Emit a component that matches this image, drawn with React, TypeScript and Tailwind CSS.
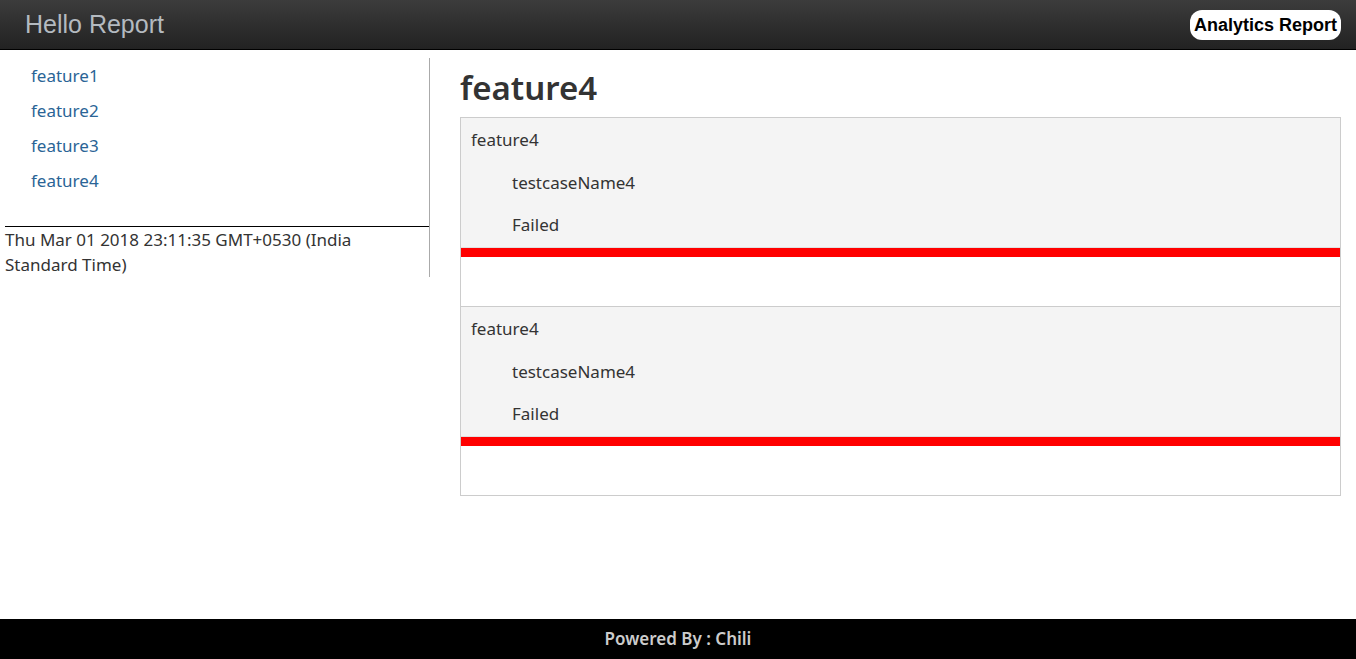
const features = ["feature1", "feature2", "feature3", "feature4"];

const results = [
  { feature: "feature4", testcase: "testcaseName4", status: "Failed" },
  { feature: "feature4", testcase: "testcaseName4", status: "Failed" },
];

function ResultCard({ feature, testcase, status }: { feature: string; testcase: string; status: string }) {
  return (
    <div className="flex flex-col">
      <div className="bg-[#f4f4f4] pt-[10px] pb-[10px]">
        <p className="h-[24px] pl-[10px] leading-[24px]">{feature}</p>
        <p className="mt-[19px] h-[24px] pl-[51px] leading-[24px]">{testcase}</p>
        <p className="mt-[18px] h-[24px] pl-[51px] leading-[24px]">{status}</p>
      </div>
      <div className="h-[10px] border-t border-[#e0e0e0] bg-[#ff0000]" />
      <div className="h-[49px] bg-white" />
    </div>
  );
}

export default function App() {
  return (
    <div className="flex h-[659px] flex-col bg-white font-['Noto_Sans',sans-serif] text-[17px] text-[#333]">
      <header className="flex h-[50px] shrink-0 items-center justify-between border-b border-black bg-gradient-to-b from-[#3c3c3c] to-[#222222] pl-[25px] pr-[15px]">
        <span className="font-['Liberation_Sans',sans-serif] text-[25px] text-[#b4bac0]">Hello Report</span>
        <span className="rounded-[12px] bg-white px-[4px] py-[3px] font-['Liberation_Sans',sans-serif] text-[18px] font-bold leading-[24px] text-black">
          Analytics Report
        </span>
      </header>

      <div className="flex flex-1 items-start">
        <aside className="mt-[8px] w-[430px] shrink-0 border-r border-[#aaa]">
          <ul className="pt-[5px] pb-[23px]">
            {features.map((f) => (
              <li key={f} className="h-[35px] pl-[31px] leading-[26px] text-[#2a6496]">
                {f}
              </li>
            ))}
          </ul>
          <div className="ml-[5px] border-t border-black pr-[40px] leading-[25px]">
            Thu Mar 01 2018 23:11:35 GMT+0530 (India Standard Time)
          </div>
        </aside>

        <main className="mr-[15px] ml-[30px] flex-1">
          <h1 className="mt-[14px] mb-[5px] text-[33px] leading-[48px] font-semibold">feature4</h1>
          <div className="border border-[#ccc] [&>*+*]:border-t [&>*+*]:border-[#ccc]">
            {results.map((r, i) => (
              <ResultCard key={i} {...r} />
            ))}
          </div>
        </main>
      </div>

      <footer className="flex h-[40px] shrink-0 items-center justify-center bg-black text-[17px] font-semibold text-[#ccc]">
        Powered By : Chili
      </footer>
    </div>
  );
}
